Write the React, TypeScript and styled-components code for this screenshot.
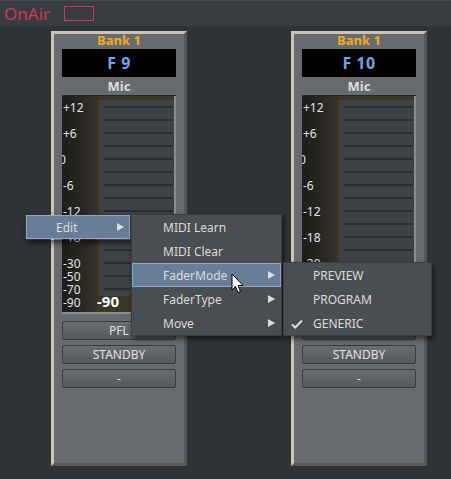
import React from "react"
import styled, {createGlobalStyle} from "styled-components"

const GlobalStyle = createGlobalStyle`
  html, body {
    margin: 0;
    padding: 0;
    background: #2f3237;
    font-family: "Noto Sans", "Open Sans", sans-serif;
    overflow: hidden;
  }
`;

const Page = styled.div`
  position: relative;
  width: 451px;
  height: 479px;
  background: #2f3237;
`;

const TopBar = styled.div`
  height: 26px;
  display: flex;
  align-items: center;
  gap: 14px;
  padding-left: 4px;
  background: #383b40;
  border-top: 1px solid #45484d;
  box-sizing: border-box;
`;

const OnAirLabel = styled.span`
  color: #cc3a5c;
  font-size: 17px;
  line-height: 1;
`;

const OnAirLamp = styled.span`
  width: 28px;
  height: 13px;
  border: 1px solid #cc3a5c;
`;

const StripRow = styled.div`
  display: flex;
  gap: 104px;
  padding: 5px 0 0 51px;
`;

const Strip = styled.div`
  width: 136px;
  height: 435px;
  box-sizing: border-box;
  background: #676a6e;
  border-left: 3px solid #c9c5b3;
  border-top: 3px solid #c9c5b3;
  border-right: 3px solid #56574f;
  border-bottom: 3px solid #5c5a50;
  padding: 0 8px;
  display: flex;
  flex-direction: column;
`;

const BankTitle = styled.div`
  height: 15px;
  line-height: 13px;
  text-align: center;
  color: #f7a823;
  font-weight: bold;
  font-size: 13px;
`;

const Display = styled.div`
  height: 28px;
  background: #000;
  display: flex;
  align-items: center;
  justify-content: center;
  color: #6ea5ea;
  font-weight: bold;
  font-size: 16px;
  letter-spacing: 0.5px;
`;

const SourceName = styled.div`
  height: 18px;
  line-height: 18px;
  text-align: center;
  color: #dedede;
  font-weight: bold;
  font-size: 13px;
`;

const Meter = styled.div`
  position: relative;
  height: 219px;
  overflow: hidden;
  background: linear-gradient(90deg, #1c1d1c 0%, #2a2924 20%, #3b352a 32%, #3b352a 100%);
  border-top: 1px solid #222427;
  border-bottom: 2px solid #8e8f8a;
  box-sizing: border-box;
`;

const MeterEdge = styled.div`
  position: absolute;
  top: 0;
  right: 0;
  width: 2px;
  height: 100%;
  background: #8a8c8f;
`;

const FaderTrack = styled.div<{$bottom: number}>`
  position: absolute;
  top: 4px;
  left: 37px;
  right: 2px;
  bottom: ${p => p.$bottom}px;
  background: #3e4145;
  display: flex;
  flex-direction: column;
  padding: 6px 1px 0 5px;
  gap: 11px;
`;

const TrackLine = styled.div`
  height: 2px;
  background: #2a2d30;
  flex-shrink: 0;
`;

const ScaleLabel = styled.span`
  position: absolute;
  left: 1px;
  color: #e4e4e4;
  font-size: 12px;
  line-height: 12px;
  transform: translateY(-6px);
`;

const LevelValue = styled.span`
  position: absolute;
  left: 35px;
  bottom: 3px;
  color: #fff;
  font-weight: bold;
  font-size: 15px;
  line-height: 15px;
`;

const StripButtons = styled.div`
  display: flex;
  flex-direction: column;
  gap: 5px;
  margin-top: 7px;
`;

const StripButton = styled.div`
  height: 19px;
  box-sizing: border-box;
  border: 1px solid #36393c;
  border-radius: 2px;
  background: linear-gradient(180deg, #6a6d71 0%, #55585c 100%);
  color: #e2e2e2;
  font-size: 12px;
  display: flex;
  align-items: center;
  justify-content: center;
`;

const Menu = styled.div<{$x: number; $y: number; $w: number; $bare?: boolean}>`
  position: absolute;
  left: ${p => p.$x}px;
  top: ${p => p.$y}px;
  width: ${p => p.$w}px;
  box-sizing: border-box;
  background: ${p => (p.$bare ? "transparent" : "#4a4d51")};
  border: 1px solid ${p => (p.$bare ? "transparent" : "#3a3c40")};
  box-shadow: 2px 3px 5px rgba(0, 0, 0, 0.55);
  display: flex;
  flex-direction: column;
`;

const MenuItem = styled.div<{$active?: boolean; $indent: number}>`
  position: relative;
  height: 24px;
  box-sizing: border-box;
  display: flex;
  align-items: center;
  padding-left: ${p => p.$indent}px;
  color: #dcdcdc;
  font-size: 12px;
  background: ${p => (p.$active ? "#687d97" : "transparent")};
  border: 1px solid ${p => (p.$active ? "#90a7c4" : "transparent")};
`;

const SubArrow = styled.span`
  position: absolute;
  right: 5px;
  top: 50%;
  transform: translateY(-50%);
  width: 0;
  height: 0;
  border-top: 4px solid transparent;
  border-bottom: 4px solid transparent;
  border-left: 7px solid #dedede;
`;

const CheckMark = styled.svg`
  position: absolute;
  left: 6px;
  top: 7px;
`;

const Cursor = styled.svg`
  position: absolute;
  left: 231px;
  top: 273px;
`;

type Tick = {label: string; y: number};

const ticks: Tick[] = [
  {label: "+12", y: 12},
  {label: "+6", y: 38},
  {label: "0", y: 64},
  {label: "-6", y: 90},
  {label: "-12", y: 116},
  {label: "-18", y: 142},
  {label: "-30", y: 168},
  {label: "-50", y: 181},
  {label: "-70", y: 194},
  {label: "-90", y: 207},
];

function ChannelStrip({name}: {name: string}) {
  return (
    <Strip>
      <BankTitle>Bank 1</BankTitle>
      <Display>{name}</Display>
      <SourceName>Mic</SourceName>
      <Meter>
        <FaderTrack $bottom={16}>
          {Array.from({length: 15}).map((_, i) => <TrackLine key={i}/>)}
        </FaderTrack>
        {ticks.map(t => (
          <ScaleLabel key={t.label} style={{top: t.y}}>
            {t.label === "0" ? <span style={{marginLeft: -4}}>0</span> : t.label}
          </ScaleLabel>
        ))}
        <LevelValue>-90</LevelValue>
        <MeterEdge/>
      </Meter>
      <StripButtons>
        <StripButton>PFL</StripButton>
        <StripButton>STANDBY</StripButton>
        <StripButton>-</StripButton>
      </StripButtons>
    </Strip>
  )
}

export default function App() {
  return (
    <Page>
      <GlobalStyle/>
      <TopBar>
        <OnAirLabel>OnAir</OnAirLabel>
        <OnAirLamp/>
      </TopBar>
      <StripRow>
        <ChannelStrip name="F 9"/>
        <ChannelStrip name="F 10"/>
      </StripRow>

      <Menu $x={25} $y={214} $w={106} $bare>
        <MenuItem $active $indent={29}>Edit<SubArrow/></MenuItem>
      </Menu>

      <Menu $x={131} $y={214} $w={151}>
        <MenuItem $indent={30}>MIDI Learn</MenuItem>
        <MenuItem $indent={30}>MIDI Clear</MenuItem>
        <MenuItem $active $indent={30}>FaderMode<SubArrow/></MenuItem>
        <MenuItem $indent={30}>FaderType<SubArrow/></MenuItem>
        <MenuItem $indent={30}>Move<SubArrow/></MenuItem>
      </Menu>

      <Menu $x={283} $y={262} $w={149}>
        <MenuItem $indent={28}>PREVIEW</MenuItem>
        <MenuItem $indent={28}>PROGRAM</MenuItem>
        <MenuItem $indent={28}>
          <CheckMark width="12" height="10" viewBox="0 0 12 10">
            <path d="M1 5.5 L4.2 8.5 L11 1.5" fill="none" stroke="#dcdcdc" strokeWidth="2"/>
          </CheckMark>
          GENERIC
        </MenuItem>
      </Menu>

      <Cursor width="13" height="21" viewBox="0 0 13 21">
        <path d="M1 1 L1 17 L4.5 13.5 L7 19.5 L9.5 18.5 L7 12.5 L12 12.5 Z"
              fill="#fff" stroke="#000" strokeWidth="1" strokeLinejoin="miter"/>
      </Cursor>
    </Page>
  )
}
